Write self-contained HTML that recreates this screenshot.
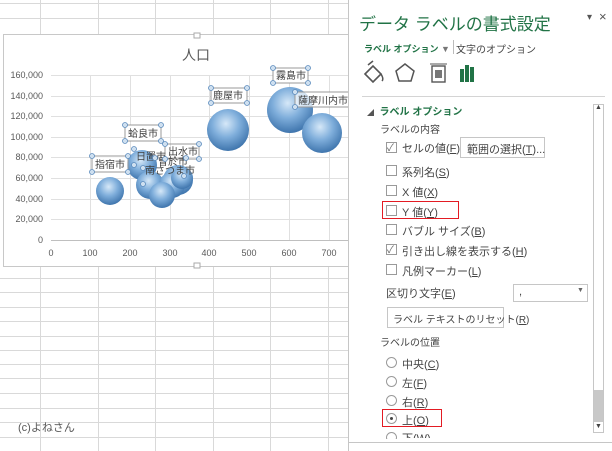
<!DOCTYPE html>
<html><head><meta charset="utf-8"><style>
*{margin:0;padding:0;box-sizing:border-box}
body{width:612px;height:451px;overflow:hidden;background:#fff;font-family:"Liberation Sans","Noto Sans CJK JP",sans-serif;position:relative}
.grid{position:absolute;left:0;top:0;width:348px;height:451px}
.panel{position:absolute;left:348px;top:0;width:264px;height:451px;background:#fff;border-left:1px solid #c6c6c6}
.t{position:absolute;font-size:11px;color:#444;white-space:nowrap}
.cb{position:absolute;width:11px;height:11px;border:1px solid #9a9a9a;background:#fff}
.rd{position:absolute;width:11px;height:11px;border:1px solid #9a9a9a;border-radius:50%;background:#fff}
.g{color:#217346}
u{text-decoration:underline}
</style></head><body>
<svg class="grid" width="348" height="451">
<g stroke="#d9d9d9" stroke-width="1">
<line x1="40.5" y1="0" x2="40.5" y2="451"/><line x1="98.5" y1="0" x2="98.5" y2="451"/><line x1="155.5" y1="0" x2="155.5" y2="451"/><line x1="213.5" y1="0" x2="213.5" y2="451"/><line x1="270.5" y1="0" x2="270.5" y2="451"/><line x1="328.5" y1="0" x2="328.5" y2="451"/>
<line x1="0" y1="3.5" x2="348" y2="3.5"/><line x1="0" y1="18.5" x2="348" y2="18.5"/>
<line x1="0" y1="278.5" x2="348" y2="278.5"/><line x1="0" y1="292.5" x2="348" y2="292.5"/><line x1="0" y1="307.5" x2="348" y2="307.5"/><line x1="0" y1="321.5" x2="348" y2="321.5"/><line x1="0" y1="336.5" x2="348" y2="336.5"/><line x1="0" y1="350.5" x2="348" y2="350.5"/><line x1="0" y1="364.5" x2="348" y2="364.5"/><line x1="0" y1="378.5" x2="348" y2="378.5"/><line x1="0" y1="393.5" x2="348" y2="393.5"/><line x1="0" y1="408.5" x2="348" y2="408.5"/><line x1="0" y1="422.5" x2="348" y2="422.5"/><line x1="0" y1="437.5" x2="348" y2="437.5"/>
</g>
<rect x="3.5" y="34.5" width="346" height="232" fill="#fff" stroke="#c8c8c8"/>
<rect x="194" y="33" width="6" height="5" fill="#fff" stroke="#aaa"/><rect x="194" y="263" width="6" height="5" fill="#fff" stroke="#aaa"/>
<text x="196" y="60" font-size="14" fill="#595959" text-anchor="middle" font-family="Liberation Sans,Noto Sans CJK JP,sans-serif">人口</text>
<g stroke="#e0e0e0">
<line x1="51" y1="75.5" x2="348" y2="75.5"/><line x1="51" y1="96.5" x2="348" y2="96.5"/><line x1="51" y1="116.5" x2="348" y2="116.5"/><line x1="51" y1="137.5" x2="348" y2="137.5"/><line x1="51" y1="157.5" x2="348" y2="157.5"/><line x1="51" y1="178.5" x2="348" y2="178.5"/><line x1="51" y1="199.5" x2="348" y2="199.5"/><line x1="51" y1="219.5" x2="348" y2="219.5"/>
<line x1="90.5" y1="75" x2="90.5" y2="240"/><line x1="130.5" y1="75" x2="130.5" y2="240"/><line x1="170.5" y1="75" x2="170.5" y2="240"/><line x1="209.5" y1="75" x2="209.5" y2="240"/><line x1="249.5" y1="75" x2="249.5" y2="240"/><line x1="289.5" y1="75" x2="289.5" y2="240"/><line x1="329.5" y1="75" x2="329.5" y2="240"/>
</g>
<line x1="51" y1="240.5" x2="348" y2="240.5" stroke="#bfbfbf"/>
<g font-size="9" fill="#595959" text-anchor="end" font-family="Liberation Sans,sans-serif">
<text x="43" y="78">160,000</text><text x="43" y="99">140,000</text><text x="43" y="119">120,000</text><text x="43" y="140">100,000</text><text x="43" y="160">80,000</text><text x="43" y="181">60,000</text><text x="43" y="202">40,000</text><text x="43" y="222">20,000</text><text x="43" y="243">0</text>
</g>
<g font-size="9" fill="#595959" text-anchor="middle" font-family="Liberation Sans,sans-serif">
<text x="51" y="256">0</text><text x="90" y="256">100</text><text x="130" y="256">200</text><text x="170" y="256">300</text><text x="209" y="256">400</text><text x="249" y="256">500</text><text x="289" y="256">600</text><text x="329" y="256">700</text>
</g>
<defs><radialGradient id="b" cx="0.45" cy="0.35" r="0.65"><stop offset="0" stop-color="#d6e8f8"/><stop offset="0.5" stop-color="#7faedb"/><stop offset="1" stop-color="#3f75ad"/></radialGradient></defs>
<g fill="url(#b)">
<circle cx="110" cy="191" r="14"/>
<circle cx="142" cy="165" r="15"/><circle cx="150" cy="185" r="14"/><circle cx="178" cy="180" r="15"/><circle cx="172" cy="185" r="13"/><circle cx="162" cy="195" r="13"/><circle cx="182" cy="178" r="11"/>
<circle cx="228" cy="130" r="21"/><circle cx="290" cy="110" r="23"/><circle cx="322" cy="133" r="20"/>
</g>
<g font-size="10" fill="#404040" font-family="Liberation Sans,Noto Sans CJK JP,sans-serif">
<rect x="92" y="156" width="36" height="16" fill="#fff" fill-opacity="0.8" stroke="#999"/><text x="95" y="168">指宿市</text>
<rect x="125" y="125" width="36" height="16" fill="#fff" stroke="#999"/><text x="128" y="137">蛤良市</text>
<rect x="211" y="88" width="36" height="15" fill="#fff" stroke="#999"/><text x="213" y="99">鹿屋市</text>
<rect x="273" y="68" width="35" height="15" fill="#fff" stroke="#999"/><text x="276" y="79">霧島市</text>
<rect x="295" y="92" width="55" height="15" fill="#fff" fill-opacity="0.7" stroke="#999"/><text x="298" y="104">薩摩川内市</text>
<rect x="165" y="144" width="34" height="15" fill="none" stroke="#999"/><text x="168" y="155">出水市</text>
<text x="136" y="160">日置市</text><text x="158" y="165">曽於市</text><text x="145" y="174">南さつま市</text>
</g>
<g fill="#cfe0f0" stroke="#5b8bbd" stroke-width="0.8">
<circle cx="92" cy="156" r="2.5"/><circle cx="128" cy="156" r="2.5"/><circle cx="92" cy="172" r="2.5"/><circle cx="128" cy="172" r="2.5"/>
<circle cx="125" cy="125" r="2.5"/><circle cx="161" cy="125" r="2.5"/><circle cx="125" cy="141" r="2.5"/><circle cx="161" cy="141" r="2.5"/>
<circle cx="211" cy="88" r="2.5"/><circle cx="247" cy="88" r="2.5"/><circle cx="211" cy="103" r="2.5"/><circle cx="247" cy="103" r="2.5"/>
<circle cx="273" cy="68" r="2.5"/><circle cx="308" cy="68" r="2.5"/><circle cx="273" cy="83" r="2.5"/><circle cx="308" cy="83" r="2.5"/>
<circle cx="295" cy="92" r="2.5"/><circle cx="295" cy="107" r="2.5"/>
<circle cx="165" cy="144" r="2.5"/><circle cx="199" cy="144" r="2.5"/><circle cx="165" cy="159" r="2.5"/><circle cx="199" cy="159" r="2.5"/>
<circle cx="134" cy="149" r="2.5"/><circle cx="134" cy="165" r="2.5"/><circle cx="155" cy="158" r="2.5"/><circle cx="186" cy="158" r="2.5"/><circle cx="143" cy="168" r="2.5"/><circle cx="143" cy="184" r="2.5"/><circle cx="184" cy="176" r="2.5"/>
</g>
<text x="18" y="431" font-size="11" fill="#595959" font-family="Liberation Sans,Noto Sans CJK JP,sans-serif">(c)よねさん</text>
</svg>
<div class="panel">
<div class="t g" style="left:10px;top:10px;font-size:17px;color:#217346">データ ラベルの書式設定</div>
<div class="t" style="left:238px;top:12px;font-size:10px;color:#555">▾</div>
<div class="t" style="left:250px;top:9px;font-size:13px;color:#555">×</div>
<div class="t g" style="left:15px;top:42px;font-size:9px;font-weight:bold">ラベル オプション <span style="color:#777;font-weight:normal">▼</span></div>
<div style="position:absolute;left:104px;top:40px;width:1px;height:14px;background:#bbb"></div>
<div class="t" style="left:107px;top:41px;font-size:10px">文字のオプション</div>
<svg style="position:absolute;left:10px;top:60px" width="140" height="30">
<path d="M6 14 L14 6 L22 14 L14 22 Z" fill="none" stroke="#555" stroke-width="1.6"/><path d="M9 5 L14 1" stroke="#555" stroke-width="1.5"/><path d="M22 14 Q25 19 23 21" stroke="#555" fill="none" stroke-width="1.5"/>
<path d="M46 4 L55 11 L52 21 L40 21 L37 11 Z" fill="none" stroke="#555" stroke-width="1.5"/>
<rect x="73" y="6" width="13" height="16" fill="none" stroke="#555" stroke-width="1.4"/><rect x="76" y="10" width="7" height="8" fill="#777"/><line x1="71" y1="4" x2="88" y2="4" stroke="#555"/>
<rect x="101" y="9" width="4" height="13" fill="#217346"/><rect x="106" y="5" width="4" height="17" fill="#217346"/><rect x="111" y="7" width="4" height="15" fill="#217346"/>
</svg>
<div style="position:absolute;left:13px;top:96px;width:243px;height:1px;background:#d4d4d4"></div>
<div class="t g" style="left:18px;top:103px;font-size:10px;font-weight:bold"><span style="color:#555;font-size:7px">◢</span>&nbsp; ラベル オプション</div>
<div class="t" style="left:31px;top:121px;font-size:10px">ラベルの内容</div>
<div class="cb" style="left:37px;top:142px"></div><div class="t" style="left:38px;top:139px;font-size:10px;color:#666">✓</div>
<div class="t" style="left:53px;top:140px">セルの値(<u>F</u>)</div>
<div style="position:absolute;left:111px;top:137px;width:85px;height:21px;border:1px solid #c6c6c6"></div>
<div class="t" style="left:118px;top:141px">範囲の選択(<u>T</u>)...</div>
<div class="cb" style="left:37px;top:165px"></div><div class="t" style="left:53px;top:164px">系列名(<u>S</u>)</div>
<div class="cb" style="left:37px;top:185px"></div><div class="t" style="left:53px;top:184px">X 値(<u>X</u>)</div>
<div class="cb" style="left:37px;top:205px"></div><div class="t" style="left:53px;top:204px">Y 値(<u>Y</u>)</div>
<div style="position:absolute;left:33px;top:201px;width:77px;height:18px;border:1.5px solid #e31b23"></div>
<div class="cb" style="left:37px;top:224px"></div><div class="t" style="left:53px;top:223px">バブル サイズ(<u>B</u>)</div>
<div class="cb" style="left:37px;top:244px"></div><div class="t" style="left:38px;top:241px;font-size:10px;color:#666">✓</div><div class="t" style="left:53px;top:243px">引き出し線を表示する(<u>H</u>)</div>
<div class="cb" style="left:37px;top:264px"></div><div class="t" style="left:53px;top:263px">凡例マーカー(<u>L</u>)</div>
<div class="t" style="left:37px;top:285px">区切り文字(<u>E</u>)</div>
<div style="position:absolute;left:164px;top:284px;width:75px;height:18px;border:1px solid #c6c6c6"></div>
<div class="t" style="left:170px;top:286px">,</div><div class="t" style="left:228px;top:287px;font-size:7px;color:#666">▼</div>
<div style="position:absolute;left:38px;top:307px;width:117px;height:21px;border:1px solid #c6c6c6"></div>
<div class="t" style="left:44px;top:311px;font-size:10px">ラベル テキストのリセット(<u>R</u>)</div>
<div class="t" style="left:31px;top:334px;font-size:10px">ラベルの位置</div>
<div class="rd" style="left:37px;top:357px"></div><div class="t" style="left:53px;top:356px">中央(<u>C</u>)</div>
<div class="rd" style="left:37px;top:376px"></div><div class="t" style="left:53px;top:375px">左(<u>F</u>)</div>
<div class="rd" style="left:37px;top:395px"></div><div class="t" style="left:53px;top:394px">右(<u>R</u>)</div>
<div class="rd" style="left:37px;top:413px"><div style="position:absolute;left:3px;top:3px;width:3px;height:3px;border-radius:50%;background:#444"></div></div><div class="t" style="left:53px;top:412px">上(<u>O</u>)</div>
<div style="position:absolute;left:33px;top:409px;width:60px;height:18px;border:1.5px solid #e31b23"></div>
<div class="rd" style="left:37px;top:432px"></div><div class="t" style="left:53px;top:430px;height:8px;overflow:hidden">下(W)</div>
<div style="position:absolute;left:0;top:439px;width:264px;height:12px;background:#fff"></div>
<div style="position:absolute;left:244px;top:104px;width:11px;height:329px;border:1px solid #c6c6c6;background:#fff"></div>
<div style="position:absolute;left:245px;top:390px;width:9px;height:32px;background:#c8c8c8"></div>
<div class="t" style="left:246px;top:104px;font-size:7px">▲</div>
<div class="t" style="left:246px;top:423px;font-size:7px">▼</div>
<div style="position:absolute;left:0;top:442px;width:264px;height:1px;background:#c6c6c6"></div>
</div>
</body></html>
